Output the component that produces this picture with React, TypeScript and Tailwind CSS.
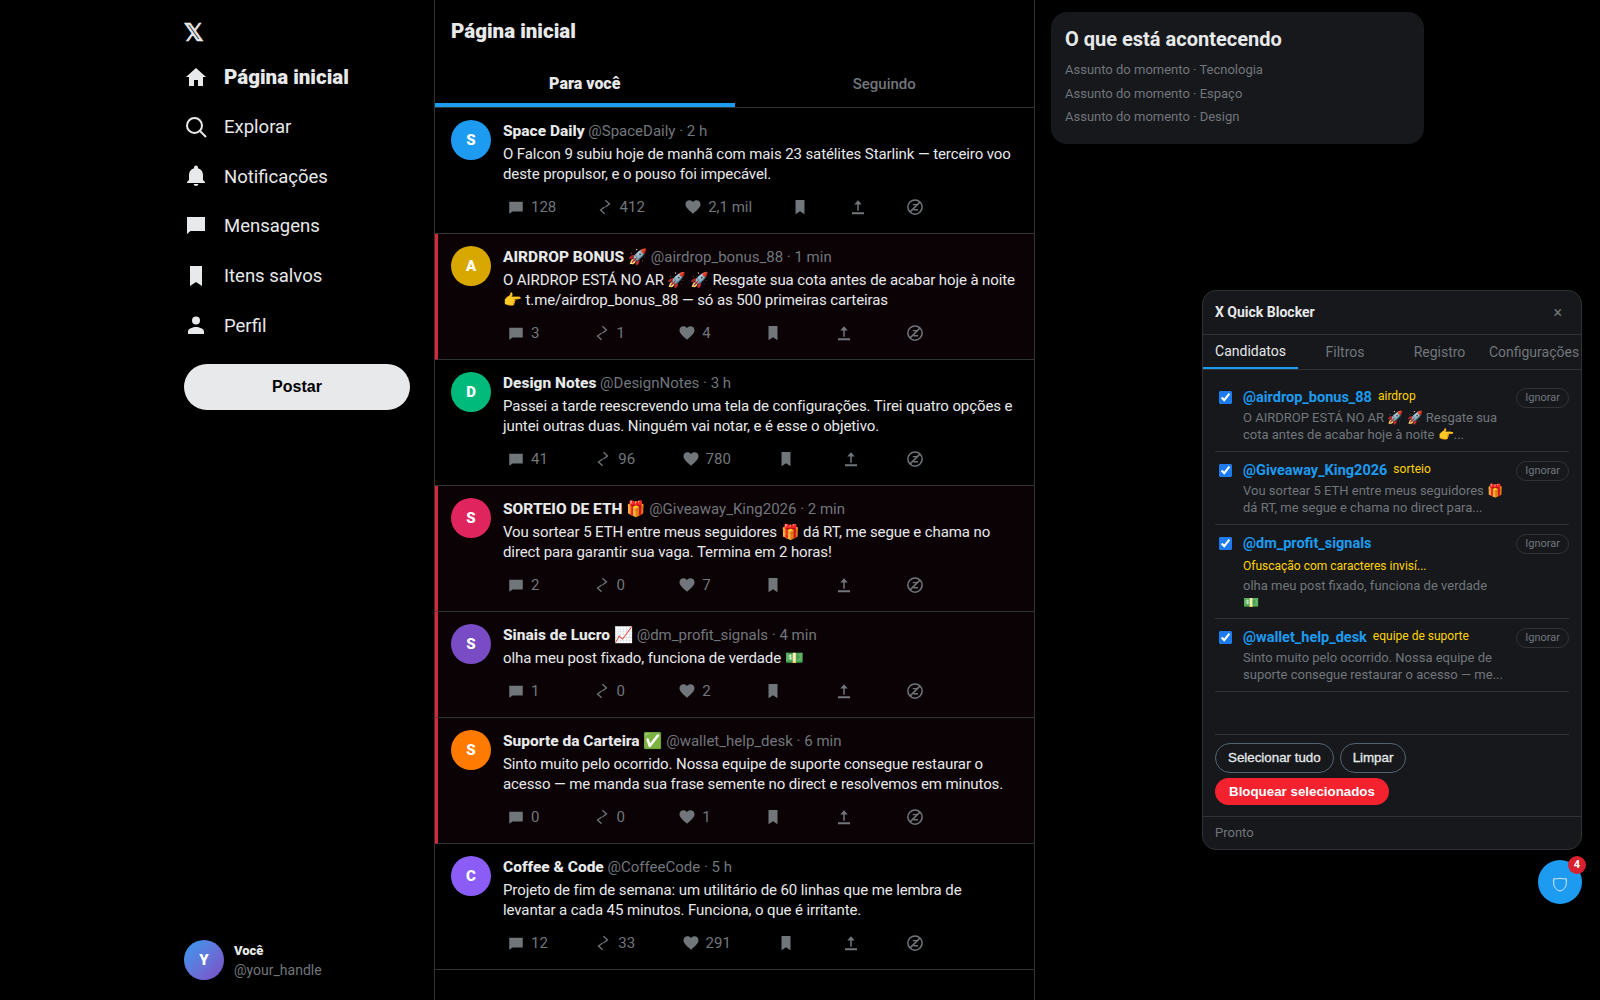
import React from "react";

const sans = "font-['Roboto','Noto_Sans',sans-serif]";

const navIcons: Record<string, React.ReactNode> = {
  home: <path d="M12 3 2 12h3v9h5v-6h4v6h5v-9h3z" />,
  search: (
    <g fill="none" stroke="currentColor" strokeWidth="2">
      <circle cx="10.500" cy="10.500" r="7.500" />
      <path d="m16 16 6 6" />
    </g>
  ),
  bell: <path d="M12 22a2.500 2.500 0 0 0 2.500-2h-5A2.500 2.500 0 0 0 12 22zm7-6v-5c0-3.200-1.700-5.900-5-6.700V3.500a2 2 0 0 0-4 0v.8C6.700 5.100 5 7.800 5 11v5l-2 2v1h18v-1z" />,
  msg: <path d="M3 3h18v14H6.500L3 20z" />,
  mark: <path d="M6 2h12v20l-6-4-6 4z" />,
  user: <path d="M12 11.500a4 4 0 1 0 0-8 4 4 0 0 0 0 8zm0 2.500c-3 0-8 1.500-8 4.500V21h16v-2.500c0-3-5-4.500-8-4.500z" />,
};

function NavIcon({ name }: { name: string }) {
  return (
    <svg viewBox="0 0 24 24" className="w-[24px] h-[24px] shrink-0" fill="currentColor">
      {navIcons[name]}
    </svg>
  );
}

function NavItem({ icon, label, active }: { icon: string; label: string; active?: boolean }) {
  return (
    <div className="flex items-center gap-[16px] h-[48px] text-[#e7e9ea]">
      <NavIcon name={icon} />
      <span className={active ? "font-black text-[20.500px]" : "text-[18.500px] pt-[2px]"}>{label}</span>
    </div>
  );
}

function ActIcon({ children }: { children: React.ReactNode }) {
  return (
    <svg viewBox="0 0 24 24" className="w-[18px] h-[18px] shrink-0" fill="currentColor">
      {children}
    </svg>
  );
}

function Action({ children, n }: { children: React.ReactNode; n?: string }) {
  return (
    <div className="flex items-center gap-[6px] px-[4px] text-[#71767b] text-[15px] leading-[20px]">
      <ActIcon>{children}</ActIcon>
      {n !== undefined && <span>{n}</span>}
    </div>
  );
}

type Post = {
  initial: string;
  color: string;
  name: string;
  handle: string;
  time: string;
  text: React.ReactNode;
  stats: [string, string, string];
  flagged?: boolean;
};

const posts: Post[] = [
  { initial: "S", color: "bg-[#1d9bf0]", name: "Space Daily", handle: "@SpaceDaily", time: "2 h", text: "O Falcon 9 subiu hoje de manhã com mais 23 satélites Starlink — terceiro voo deste propulsor, e o pouso foi impecável.", stats: ["128", "412", "2,1 mil"] },
  { initial: "A", color: "bg-[#d9a800]", name: "AIRDROP BONUS 🚀", handle: "@airdrop_bonus_88", time: "1 min", text: "O AIRDROP ESTÁ NO AR 🚀 🚀 Resgate sua cota antes de acabar hoje à noite 👉 t.me/airdrop_bonus_88 — só as 500 primeiras carteiras", stats: ["3", "1", "4"], flagged: true },
  { initial: "D", color: "bg-[#00ba7c]", name: "Design Notes", handle: "@DesignNotes", time: "3 h", text: "Passei a tarde reescrevendo uma tela de configurações. Tirei quatro opções e juntei outras duas. Ninguém vai notar, e é esse o objetivo.", stats: ["41", "96", "780"] },
  { initial: "S", color: "bg-[#e0245e]", name: "SORTEIO DE ETH 🎁", handle: "@Giveaway_King2026", time: "2 min", text: "Vou sortear 5 ETH entre meus seguidores 🎁 dá RT, me segue e chama no direct para garantir sua vaga. Termina em 2 horas!", stats: ["2", "0", "7"], flagged: true },
  { initial: "S", color: "bg-[#794bc4]", name: "Sinais de Lucro 📈", handle: "@dm_profit_signals", time: "4 min", text: "olha meu post fixado, funciona de verdade 💵", stats: ["1", "0", "2"], flagged: true },
  { initial: "S", color: "bg-[#ff7a00]", name: "Suporte da Carteira ✅", handle: "@wallet_help_desk", time: "6 min", text: "Sinto muito pelo ocorrido. Nossa equipe de suporte consegue restaurar o acesso — me manda sua frase semente no direct e resolvemos em minutos.", stats: ["0", "0", "1"], flagged: true },
  { initial: "C", color: "bg-[#8b5cf6]", name: "Coffee & Code", handle: "@CoffeeCode", time: "5 h", text: <>Projeto de fim de semana: um utilitário de 60 linhas que me lembra de<br />levantar a cada 45 minutos. Funciona, o que é irritante.</>, stats: ["12", "33", "291"] },
];

function PostRow({ p }: { p: Post }) {
  return (
    <article className={`flex gap-[12px] pr-[16px] pt-[12px] pb-[16px] border-b border-[#2f3336] ${p.flagged ? "border-l-[3px] border-l-[#d92638] pl-[13px] bg-[#0b0205]" : "pl-[16px]"}`}>
      <div className={`w-[40px] h-[40px] rounded-full shrink-0 flex items-center justify-center text-white font-black text-[15px] pt-[1px] ${p.color}`}>
        {p.initial}
      </div>
      <div className="flex-1 min-w-0 pt-[1px]">
        <div className="text-[15px] leading-[20px]">
          <span className="font-extrabold text-[15.500px] text-[#e7e9ea]">{p.name}</span>
          <span className="text-[#71767b]"> {p.handle} · {p.time}</span>
        </div>
        <div className="text-[15px] leading-[20px] tracking-[-0.1px] text-[#e7e9ea] mt-[3px]">{p.text}</div>
        <div className="flex justify-between max-w-[425px] mt-[13px] h-[20px]">
          <Action n={p.stats[0]}><path d="M3 5h18v13H7.500L3 21z" /></Action>
          <Action n={p.stats[1]}>
            <path d="M12.500 3 18 8l-5.500 4M11.500 12 6 16l5.500 5" fill="none" stroke="currentColor" strokeWidth="1.700" />
          </Action>
          <Action n={p.stats[2]}><path d="M12 21l-1.400-1.300C5.400 15 2 11.900 2 8.200 2 5.100 4.400 3 7.300 3c1.800 0 3.500.8 4.700 2.200C13.200 3.800 14.900 3 16.700 3 19.600 3 22 5.100 22 8.200c0 3.700-3.400 6.800-8.600 11.500z" /></Action>
          <Action><path d="M6 2.500h12v19l-6-4-6 4z" /></Action>
          <Action><path d="M12 3l5 5.500h-4V17h-2V8.500H7zM4 19h16v2.500H4z" /></Action>
          <Action>
            <circle cx="12" cy="12" r="9.500" fill="none" stroke="currentColor" strokeWidth="2" />
            <path d="M5.500 18.500l13-13" stroke="currentColor" strokeWidth="2" />
            <path d="M9 8h6.500v1.800H9zM10 14.500h6v2h-6z" />
          </Action>
        </div>
      </div>
    </article>
  );
}

function Candidate({ handle, tag, longTag, text }: { handle: string; tag?: string; longTag?: string; text: string }) {
  return (
    <div className={`flex items-start gap-[11px] pt-[9px] border-b border-[#2f3336] ${longTag ? "pb-[7px]" : "pb-[8px]"}`}>
      <input type="checkbox" defaultChecked className="w-[13px] h-[13px] mt-[3px] ml-[4px] shrink-0 accent-[#1d7bf0]" />
      <div className="flex-1 min-w-0">
        <div className="flex items-center gap-[6px] h-[20px]">
          <span className="text-[#1d9bf0] font-bold text-[14.500px]">{handle}</span>
          {tag && <span className="text-[#ffd400] text-[12px] -mt-[4px]">{tag}</span>}
        </div>
        {longTag && <div className="text-[#ffd400] text-[12px] leading-[16px] mt-[4px]">{longTag}</div>}
        <div className={`text-[#71767b] text-[13px] leading-[17px] ${longTag ? "mt-[3px]" : "mt-[1px]"}`}>{text}</div>
      </div>
      <div className="shrink-0 h-[20px] px-[8px] rounded-full border border-[#2f3336] text-[#71767b] text-[11px] leading-[18px]">Ignorar</div>
    </div>
  );
}

export default function App() {
  return (
    <div className={`relative min-h-screen bg-black text-[#e7e9ea] ${sans}`}>
      <div className="mx-auto flex w-[1280px] h-[1000px] overflow-hidden">
        <aside className="w-[274px] pl-[24px] pr-[24px] pb-[20px] pt-[19px] flex flex-col shrink-0">
          <div className="h-[28px] mb-[6px] text-[24px] leading-[28px] font-bold font-['DejaVu_Sans',sans-serif] [-webkit-text-stroke:0.7px_#e7e9ea]">𝕏</div>
          <div className="flex flex-col gap-[1.700px]">
            <NavItem icon="home" label="Página inicial" active />
            <NavItem icon="search" label="Explorar" />
            <NavItem icon="bell" label="Notificações" />
            <NavItem icon="msg" label="Mensagens" />
            <NavItem icon="mark" label="Itens salvos" />
            <NavItem icon="user" label="Perfil" />
          </div>
          <button className="mt-[14.500px] w-[226px] h-[46px] rounded-full bg-[#e7e9ea] text-black font-bold text-[16px] font-['Liberation_Sans',sans-serif]">Postar</button>
          <div className="mt-auto flex items-center gap-[10px]">
            <div className="w-[40px] h-[40px] rounded-full bg-gradient-to-br from-[#1d9bf0] to-[#794bc4] flex items-center justify-center text-white font-black text-[15px] pt-[1px]">Y</div>
            <div>
              <div className="font-black text-[13px] leading-[20px] text-[#e7e9ea]">Você</div>
              <div className="text-[14px] leading-[19px] text-[#71767b]">@your_handle</div>
            </div>
          </div>
        </aside>
        <main className="w-[601px] shrink-0 border-x border-[#2f3336]">
          <div className="border-b border-[#2f3336]">
            <div className="px-[16px] h-[62px] flex items-center text-[20.500px] font-black">Página inicial</div>
            <div className="flex h-[45px]">
              <div className="flex-1 flex flex-col items-center justify-between">
                <span className="flex-1 flex items-center font-black text-[16px] pt-[3px]">Para você</span>
                <span className="w-full h-[4px] bg-[#1d9bf0]" />
              </div>
              <div className="flex-1 flex items-center justify-center text-[15px] font-medium text-[#71767b]">Seguindo</div>
            </div>
          </div>
          {posts.map((p) => <PostRow key={p.handle} p={p} />)}
        </main>
        <section className="flex-1 p-[16px] pt-[12px]">
          <div className="rounded-[16px] bg-[#16181c] px-[14px] pt-[12px] h-[132px]">
            <h2 className="text-[20px] font-bold leading-[30px] text-[#e7e9ea]">O que está acontecendo</h2>
            <div className="mt-[6px] flex flex-col gap-[3.500px] text-[13px] leading-[20px] text-[#71767b]">
              <div>Assunto do momento · Tecnologia</div>
              <div>Assunto do momento · Espaço</div>
              <div>Assunto do momento · Design</div>
            </div>
          </div>
        </section>
      </div>

      <div className="absolute left-[1202px] top-[290px] w-[380px] h-[560px] flex flex-col rounded-[14px] border border-[#2f3336] bg-[#16181c]">
        <div className="h-[44px] flex items-center justify-between pl-[12px] pr-[19px] border-b border-[#2f3336]">
          <span className="font-bold text-[14px]">X Quick Blocker</span>
          <span className="text-[#71767b] text-[16px] leading-none">×</span>
        </div>
        <div className="flex h-[35px] border-b border-[#2f3336] text-[14px] text-[#71767b]">
          <div className="w-[95px] flex flex-col"><span className="flex-1 flex items-center justify-center text-[#e7e9ea]">Candidatos</span><span className="h-[2px] bg-[#1d9bf0]" /></div>
          <div className="w-[94px] flex items-center justify-center">Filtros</div>
          <div className="w-[95px] flex items-center justify-center">Registro</div>
          <div className="flex-1 flex items-center justify-center whitespace-nowrap">Configurações</div>
        </div>
        <div className="flex-1 px-[12px] pt-[9px]">
          <Candidate handle="@airdrop_bonus_88" tag="airdrop" text="O AIRDROP ESTÁ NO AR 🚀 🚀 Resgate sua cota antes de acabar hoje à noite 👉..." />
          <Candidate handle="@Giveaway_King2026" tag="sorteio" text="Vou sortear 5 ETH entre meus seguidores 🎁 dá RT, me segue e chama no direct para..." />
          <Candidate handle="@dm_profit_signals" longTag="Ofuscação com caracteres invisí..." text="olha meu post fixado, funciona de verdade 💵" />
          <Candidate handle="@wallet_help_desk" tag="equipe de suporte" text="Sinto muito pelo ocorrido. Nossa equipe de suporte consegue restaurar o acesso — me..." />
        </div>
        <div className="mx-[12px] pt-[8px] pb-[11px] border-t border-[#2f3336] font-['Liberation_Sans',sans-serif]">
          <div className="flex gap-[6px]">
            <button className="h-[30px] px-[12px] rounded-full border border-[#536471] text-[#e7e9ea] text-[13.330px] [-webkit-text-stroke:0.3px_#e7e9ea]">Selecionar tudo</button>
            <button className="h-[30px] px-[12px] rounded-full border border-[#536471] text-[#e7e9ea] text-[13.330px] [-webkit-text-stroke:0.3px_#e7e9ea]">Limpar</button>
          </div>
          <button className="mt-[5px] h-[27px] px-[14px] rounded-full bg-[#f4212e] text-white font-bold text-[13.330px]">Bloquear selecionados</button>
        </div>
        <div className="h-[33px] px-[12px] flex items-center border-t border-[#2f3336] text-[13px] text-[#71767b]">Pronto</div>
      </div>

      <div className="absolute left-[1538px] top-[860px] w-[44px] h-[44px] rounded-full bg-[#1d9bf0] flex items-center justify-center">
        <svg viewBox="0 0 24 24" className="w-[20px] h-[20px] mt-[3px]" fill="none" stroke="#e7e9ea" strokeWidth="1.200"><path d="M12 5c2.500 1 5 1 7.500.5v6c0 4.500-3 7.500-7.500 9-4.500-1.500-7.500-4.500-7.500-9v-6C7 6 9.500 6 12 5z" /></svg>
        <span className="absolute -top-[4px] -right-[4px] w-[18px] h-[18px] rounded-full bg-[#d9202e] text-white font-bold text-[11px] flex items-center justify-center">4</span>
      </div>
    </div>
  );
}
